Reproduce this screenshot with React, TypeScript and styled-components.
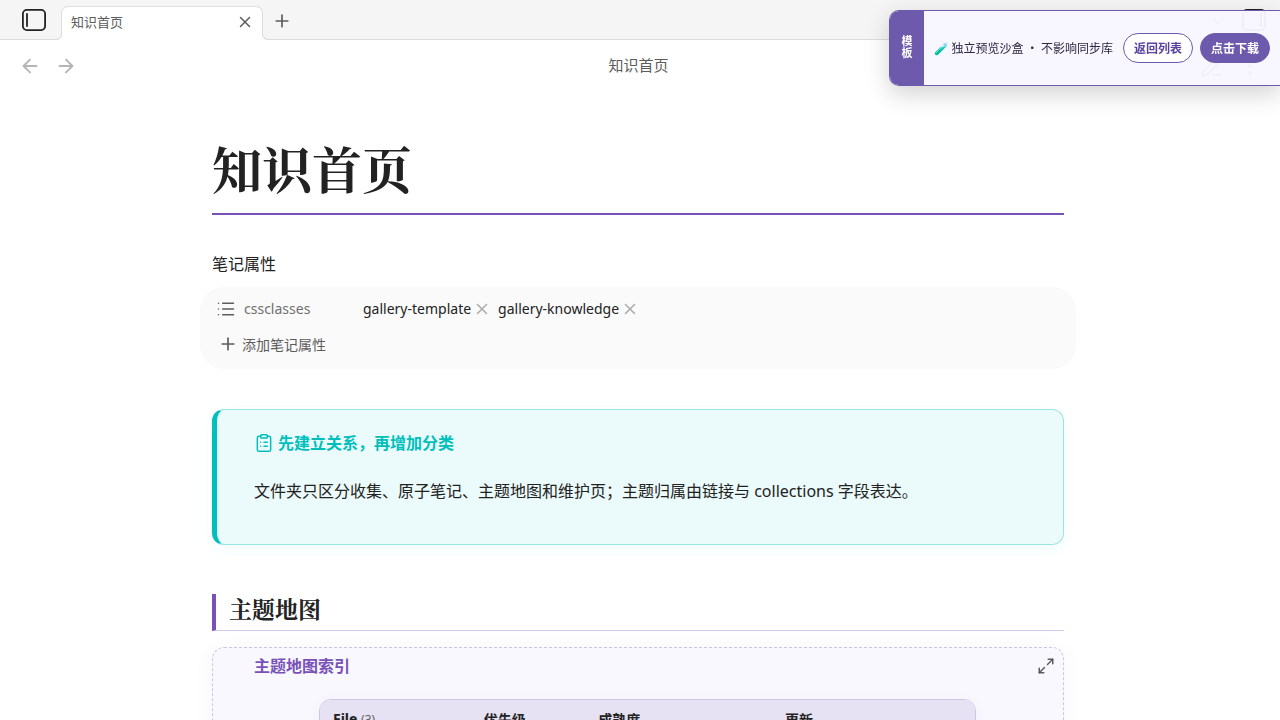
import React from "react";
import styled, { createGlobalStyle } from "styled-components";
import {
  ArrowLeft,
  ArrowRight,
  ChevronDown,
  ClipboardList,
  EllipsisVertical,
  List,
  Maximize2,
  PenLine,
  Plus,
  X,
} from "lucide-react";

const GlobalStyle = createGlobalStyle`
  *, *::before, *::after { box-sizing: border-box; }
  body {
    margin: 0;
    background: #ffffff;
    color: #222222;
    font-family: "Noto Sans", "Noto Sans CJK SC", sans-serif;
    font-size: 16px;
    line-height: 24px;
  }
  h1, h2, h3, p { margin: 0; }
  button { font-family: inherit; }
`;

const Workspace = styled.div`
  display: flex;
  flex-direction: column;
  height: 100vh;
  overflow: hidden;
`;

const IconButton = styled.button<{ $tone?: string }>`
  display: inline-flex;
  align-items: center;
  justify-content: center;
  flex: none;
  padding: 0;
  border: 0;
  background: transparent;
  color: ${(p) => p.$tone ?? "#5c5c5c"};
  cursor: pointer;
`;

const SidebarToggle = styled(IconButton)`
  padding-bottom: 2px;
  color: #222222;
`;

/* Tab strip */
const TabStrip = styled.header`
  display: flex;
  align-items: center;
  height: 40px;
  flex: none;
  padding: 1px 14px 0 22px;
  background: #f5f5f5;
  box-shadow: inset 0 -1px 0 #dddddd;
`;

const Tab = styled.div`
  position: relative;
  display: flex;
  align-items: center;
  justify-content: space-between;
  align-self: flex-end;
  width: 202px;
  height: 34px;
  margin: 0 9px 0 15px;
  padding: 0 8px 3px 9px;
  border: 1px solid #dddddd;
  border-bottom: 0;
  border-radius: 7px 7px 0 0;
  background: #ffffff;
  color: #5c5c5c;
  font-size: 13px;

  &::before,
  &::after {
    content: "";
    position: absolute;
    bottom: 0;
    width: 6px;
    height: 6px;
    border-bottom: 1px solid #dddddd;
  }
  &::before {
    left: -6px;
    border-right: 1px solid #dddddd;
    border-bottom-right-radius: 6px;
    box-shadow: 2px 2px 0 #ffffff;
  }
  &::after {
    right: -6px;
    border-left: 1px solid #dddddd;
    border-bottom-left-radius: 6px;
    box-shadow: -2px 2px 0 #ffffff;
  }
`;

const StripEnd = styled.div`
  display: flex;
  align-items: center;
  gap: 14px;
  margin-left: auto;
`;

/* View header */
const ViewHeader = styled.div`
  display: grid;
  grid-template-columns: 1fr auto 1fr;
  align-items: center;
  flex: none;
  height: 52px;
  padding: 0 18px 0 19px;
  color: #5c5c5c;
  font-size: 15px;
`;

const ViewTitle = styled.span`
  padding: 0 4px 2px 0;
`;

const HeaderActions = styled.div<{ $end?: boolean }>`
  display: flex;
  gap: 14px;
  justify-content: ${(p) => (p.$end ? "flex-end" : "flex-start")};
`;

/* Note body */
const Scroller = styled.main`
  flex: 1;
  min-height: 0;
  overflow: hidden;
  padding: 49px 36px 0 32px;
`;

const Note = styled.article`
  max-width: 852px;
  margin: 0 auto;
`;

const Title = styled.h1`
  padding-bottom: 19px;
  border-bottom: 2px solid #7852b8;
  font-family: "Noto Serif CJK SC", "Noto Serif SC", "Liberation Serif", serif;
  font-size: 50px;
  font-weight: 700;
  line-height: 53px;
`;

const PropertiesHeading = styled.div`
  margin: 37px 0 11px;
`;

const Properties = styled.section`
  margin: 0 -12px;
  padding: 8px 16px 11px;
  border-radius: 24px;
  background: #fafafa;
  font-size: 14px;
`;

const PropertyRow = styled.div`
  display: flex;
  align-items: center;
  height: 28px;
`;

const PropertyName = styled.div`
  display: flex;
  align-items: center;
  gap: 8px;
  width: 147px;
  color: #707070;
  svg { color: #5c5c5c; }
`;

const Tags = styled.div`
  display: flex;
  gap: 7px;
`;

const Tag = styled.span`
  display: inline-flex;
  align-items: center;
  gap: 2px;
`;

const AddProperty = styled.button`
  display: flex;
  align-items: center;
  gap: 4px;
  height: 28px;
  margin-top: 7px;
  padding: 0 2px;
  border: 0;
  background: transparent;
  color: #5c5c5c;
  font-size: 14px;
  cursor: pointer;
`;

const Callout = styled.section`
  margin-top: 40px;
  padding: 21px 22px 40px 37px;
  border: 1px solid #99e5e4;
  border-left: 5px solid #00bfbc;
  border-radius: 12px;
  background: #ebfafa;
  box-shadow: 0 4px 16px rgba(0, 191, 188, 0.06);
`;

const CalloutTitle = styled.h3`
  display: flex;
  align-items: center;
  gap: 4px;
  color: #00bfbc;
  font-size: 16px;
  font-weight: 700;
`;

const CalloutText = styled.p`
  margin-top: 23px;
  line-height: 26px;
`;

const SectionHeading = styled.h2`
  margin-top: 49px;
  padding: 0 0 6px 13px;
  border-left: 4px solid #7852b8;
  border-bottom: 1px solid #d3c9ee;
  font-family: "Noto Serif CJK SC", "Noto Serif SC", "Liberation Serif", serif;
  font-size: 23px;
  font-weight: 700;
  line-height: 30px;
`;

const IndexCard = styled.section`
  margin-top: 16px;
  padding: 6px 22px 30px 41px;
  border: 1px dashed #cec5e6;
  border-radius: 12px;
  background: #f9f8fe;
  box-shadow: 0 4px 20px rgba(120, 82, 184, 0.07);
`;

const IndexHead = styled.div`
  display: flex;
  align-items: center;
  justify-content: space-between;
  margin-right: -14px;
  color: #7852b8;
`;

const IndexTitle = styled.h3`
  font-size: 16px;
  font-weight: 700;
`;

const TableFrame = styled.div`
  max-width: 657px;
  margin: 21px auto 0;
  border: 1px solid #cec5e6;
  border-radius: 12px;
  overflow: hidden;
  background: #ffffff;
  box-shadow: 0 2px 12px rgba(120, 82, 184, 0.06);
`;

const Table = styled.table`
  width: 100%;
  border-collapse: collapse;
  table-layout: fixed;
  font-size: 14px;
  line-height: 24px;
`;

const HeadCell = styled.th<{ $share: number }>`
  width: ${(p) => p.$share}%;
  padding: 7px 13px;
  background: #e6e1f3;
  text-align: left;
  font-weight: 700;
`;

const Count = styled.small`
  color: #5c5c5c;
  font-size: 12px;
  font-weight: 400;
`;

/* Floating preview banner */
const Banner = styled.aside`
  position: fixed;
  top: 10px;
  right: 0;
  z-index: 10;
  display: flex;
  height: 76px;
  border: 1px solid #6d5aac;
  border-right: 0;
  border-radius: 10px 0 0 10px;
  overflow: hidden;
  background: rgba(248, 246, 255, 0.96);
  box-shadow: 0 8px 24px rgba(0, 0, 0, 0.18);
  color: #2d2640;
  font-family: "Noto Sans CJK SC", sans-serif;
  font-size: 12px;
  line-height: 18px;
`;

const BannerLabel = styled.strong`
  display: flex;
  flex-direction: column;
  align-items: center;
  justify-content: center;
  width: 34px;
  padding-bottom: 4px;
  background: #6d5aac;
  color: #ffffff;
  font-size: 11px;
  line-height: 12px;
`;

const BannerBody = styled.div`
  display: flex;
  align-items: center;
  gap: 7px;
  padding: 0 10px;
`;

const BannerText = styled.span`
  margin-right: 3px;
  white-space: nowrap;
`;

const PillLink = styled.a<{ $solid?: boolean }>`
  padding: 5px 10px;
  border: 1px solid #6d5aac;
  border-radius: 15px;
  background: ${(p) => (p.$solid ? "#6d5aac" : "#ffffff")};
  color: ${(p) => (p.$solid ? "#ffffff" : "#5a43a0")};
  font-weight: 700;
  text-decoration: none;
  white-space: nowrap;
`;

const SidebarIcon = ({ right = false }: { right?: boolean }) => (
  <svg width="24" height="22" viewBox="0 0 24 22" fill="none" stroke="currentColor" strokeWidth="1.8" strokeLinecap="round">
    <rect x="0.9" y="0.9" width="22.2" height="20.2" rx="4" />
    <path d={right ? "M19 5v12" : "M5 5v12"} />
  </svg>
);

const tags = ["gallery-template", "gallery-knowledge"];

const columns = [
  { label: "File", count: 3, share: 23 },
  { label: "优先级", share: 17.5 },
  { label: "成熟度", share: 28.5 },
  { label: "更新", share: 31 },
];

export default function App() {
  return (
    <Workspace>
      <GlobalStyle />
      <TabStrip>
        <SidebarToggle aria-label="展开侧栏">
          <SidebarIcon />
        </SidebarToggle>
        <Tab>
          <span>知识首页</span>
          <IconButton aria-label="关闭标签页">
            <X size={18} strokeWidth={2} />
          </IconButton>
        </Tab>
        <IconButton aria-label="新建标签页">
          <Plus size={20} strokeWidth={2} />
        </IconButton>
        <StripEnd>
          <IconButton aria-label="标签页列表">
            <ChevronDown size={20} />
          </IconButton>
          <SidebarToggle aria-label="展开右侧栏">
            <SidebarIcon right />
          </SidebarToggle>
        </StripEnd>
      </TabStrip>

      <ViewHeader>
        <HeaderActions>
          <IconButton $tone="#b5b5b5" aria-label="后退">
            <ArrowLeft size={22} strokeWidth={2} />
          </IconButton>
          <IconButton $tone="#b5b5b5" aria-label="前进">
            <ArrowRight size={22} strokeWidth={2} />
          </IconButton>
        </HeaderActions>
        <ViewTitle>知识首页</ViewTitle>
        <HeaderActions $end>
          <IconButton aria-label="编辑">
            <PenLine size={24} />
          </IconButton>
          <IconButton aria-label="更多选项">
            <EllipsisVertical size={24} />
          </IconButton>
        </HeaderActions>
      </ViewHeader>

      <Scroller>
        <Note>
          <Title>知识首页</Title>
          <PropertiesHeading>笔记属性</PropertiesHeading>
          <Properties>
            <PropertyRow>
              <PropertyName>
                <List size={20} strokeWidth={1.75} />
                cssclasses
              </PropertyName>
              <Tags>
                {tags.map((tag) => (
                  <Tag key={tag}>
                    {tag}
                    <IconButton $tone="#ababab" aria-label={`移除 ${tag}`}>
                      <X size={18} strokeWidth={2} />
                    </IconButton>
                  </Tag>
                ))}
              </Tags>
            </PropertyRow>
            <AddProperty>
              <Plus size={20} strokeWidth={2} />
              添加笔记属性
            </AddProperty>
          </Properties>

          <Callout>
            <CalloutTitle>
              <ClipboardList size={20} strokeWidth={1.75} />
              先建立关系，再增加分类
            </CalloutTitle>
            <CalloutText>
              文件夹只区分收集、原子笔记、主题地图和维护页；主题归属由链接与 collections 字段表达。
            </CalloutText>
          </Callout>

          <SectionHeading>主题地图</SectionHeading>
          <IndexCard>
            <IndexHead>
              <IndexTitle>主题地图索引</IndexTitle>
              <IconButton aria-label="展开">
                <Maximize2 size={18} strokeWidth={2} />
              </IconButton>
            </IndexHead>
            <TableFrame>
              <Table>
                <thead>
                  <tr>
                    {columns.map((c) => (
                      <HeadCell key={c.label} $share={c.share} scope="col">
                        {c.label} {c.count && <Count>({c.count})</Count>}
                      </HeadCell>
                    ))}
                  </tr>
                </thead>
              </Table>
            </TableFrame>
          </IndexCard>
        </Note>
      </Scroller>

      <Banner>
        <BannerLabel>
          <span>模</span>
          <span>板</span>
        </BannerLabel>
        <BannerBody>
          <BannerText>🧪 独立预览沙盒 · 不影响同步库</BannerText>
          <PillLink href="#list">返回列表</PillLink>
          <PillLink href="#download" $solid>
            点击下载
          </PillLink>
        </BannerBody>
      </Banner>
    </Workspace>
  );
}
